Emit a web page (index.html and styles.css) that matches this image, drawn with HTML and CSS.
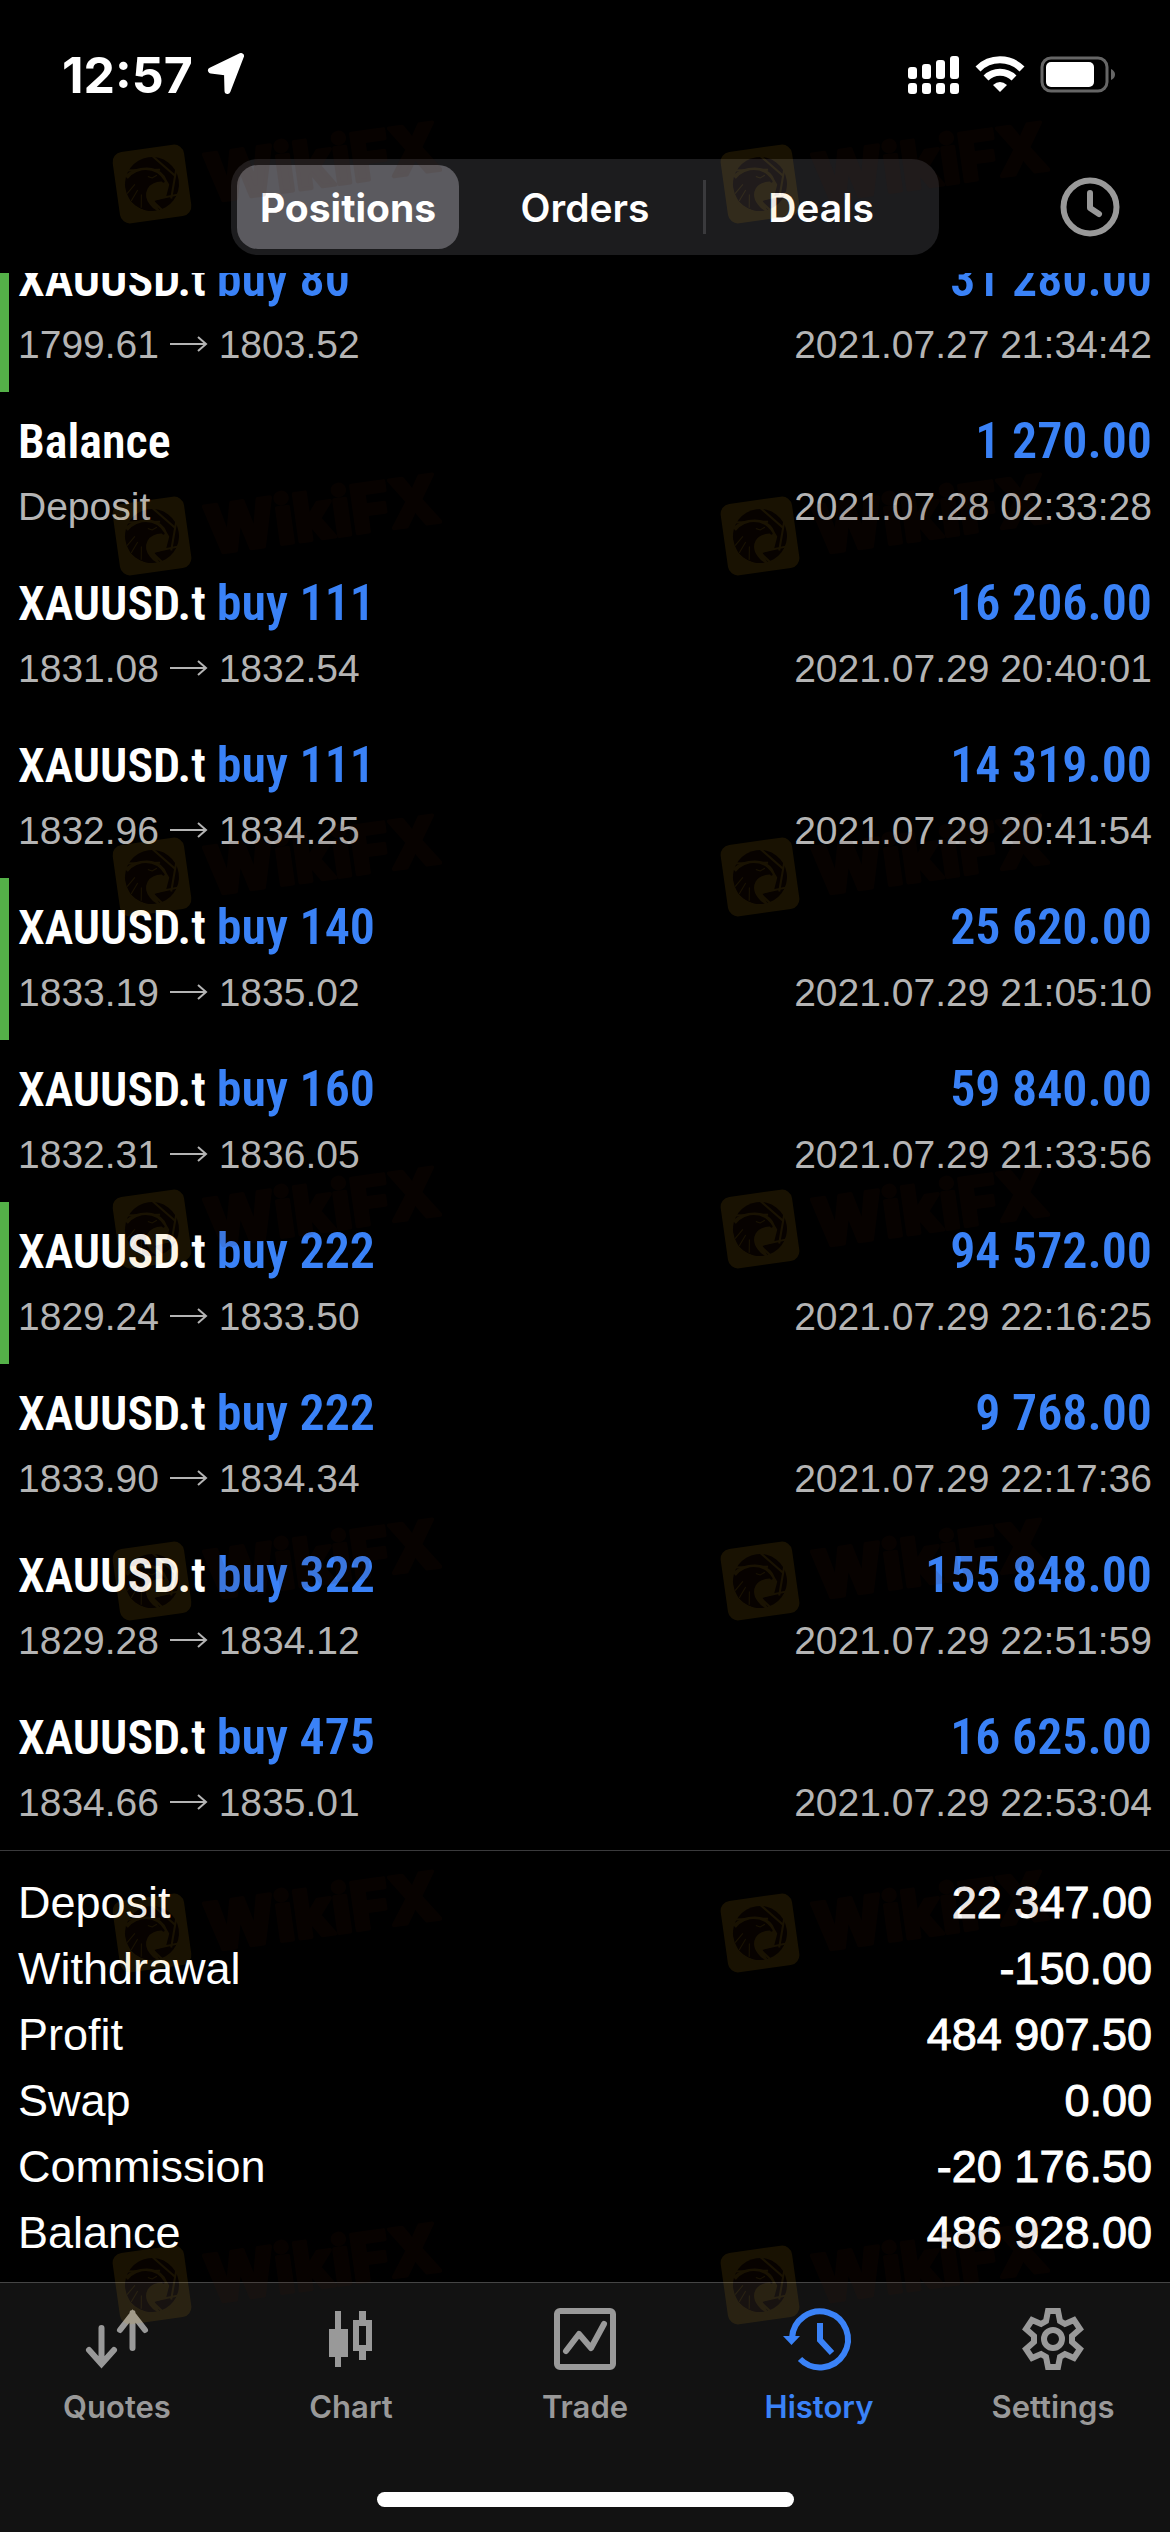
FILE: index.html
```
<!DOCTYPE html>
<html lang="en">
<head>
    <meta charset="UTF-8">
    <meta name="viewport" content="width=device-width, initial-scale=1.0">
    <title>History</title>
    <link rel="stylesheet" href="styles.css">
</head>
<body>

    <div class="status-bar">
        <div class="status-time">
            <span>12:57</span>
            <svg width="38" height="44" viewBox="0 0 38 44"><path d="M34 3 L4 17.500 L20 19.500 L20.500 38 Z" fill="#fff" stroke="#fff" stroke-width="6" stroke-linejoin="round"/></svg>
        </div>
        <div class="status-icons">
            <svg width="52" height="38" viewBox="0 0 52 38" fill="#fff">
                <rect x="0" y="11" width="9" height="12" rx="3"/><rect x="14" y="8" width="9" height="15" rx="3"/>
                <rect x="28" y="4" width="9" height="19" rx="3"/><rect x="42" y="0" width="9" height="23" rx="3"/>
                <rect x="0" y="27" width="9" height="11" rx="3"/><rect x="14" y="27" width="9" height="11" rx="3"/>
                <rect x="28" y="27" width="9" height="11" rx="3"/><rect x="42" y="27" width="9" height="11" rx="3"/>
            </svg>
            <svg width="50" height="38" viewBox="0 0 50 38" fill="none" stroke="#fff" stroke-width="7">
                <path d="M3 13 A31 31 0 0 1 47 13"/>
                <path d="M11 22 A20 20 0 0 1 39 22"/>
                <path d="M18 29 Q25 23 32 29 L25 36 Z" fill="#fff" stroke="none"/>
            </svg>
            <svg width="76" height="38" viewBox="0 0 76 38">
                <rect x="2" y="2" width="65" height="33" rx="9" fill="none" stroke="#666" stroke-width="3"/>
                <rect x="6" y="6" width="48" height="25" rx="5" fill="#fff"/>
                <path d="M71 13 Q75 15 75 18.500 Q75 22 71 24 Z" fill="#666"/>
            </svg>
        </div>
    </div>

    <div class="nav-bar">
        <div class="segmented">
            <button class="segment active">Positions</button>
            <button class="segment">Orders</button>
            <button class="segment">Deals</button>
        </div>
        <button class="clock-btn" aria-label="Period">
            <svg width="60" height="60" viewBox="0 0 60 60" fill="none" stroke="#999" stroke-width="6">
                <circle cx="30" cy="30" r="26.500"/>
                <path d="M30 16 V31 L39 37" stroke-linecap="round" stroke-linejoin="round"/>
            </svg>
        </button>
    </div>

    <div class="list" id="list"></div>

    <div class="summary">
        <div class="summary-row"><span>Deposit</span><b>22 347.00</b></div>
        <div class="summary-row"><span>Withdrawal</span><b>-150.00</b></div>
        <div class="summary-row"><span>Profit</span><b>484 907.50</b></div>
        <div class="summary-row"><span>Swap</span><b>0.00</b></div>
        <div class="summary-row"><span>Commission</span><b>-20 176.50</b></div>
        <div class="summary-row"><span>Balance</span><b>486 928.00</b></div>
    </div>

    <div class="tab-bar">
        <div class="tabs">
            <a href="#" class="tab">
                <svg width="66" height="66" viewBox="0 0 66 66" fill="none" stroke="currentColor" stroke-width="6" stroke-linecap="round">
                    <path d="M17.500 23 V58 M5 45 L17.500 59 L30 45 M48.500 43 V8 M36 25 L48.500 9 L61 25"/>
                </svg>
                <span>Quotes</span>
            </a>
            <a href="#" class="tab">
                <svg width="66" height="66" viewBox="0 0 66 66" fill="currentColor">
                    <path d="M17 6 H23 V24 H30 V52 H23 V62 H17 V52 H11 V24 H17 Z"/>
                    <path fill-rule="evenodd" d="M41 6 H48 V15 H54 V46 H48 V55 H41 V46 H35 V15 H41 Z M41 21 V40 H48 V21 Z"/>
                </svg>
                <span>Chart</span>
            </a>
            <a href="#" class="tab">
                <svg width="66" height="66" viewBox="0 0 66 66" fill="none" stroke="currentColor" stroke-width="6">
                    <rect x="5" y="6" width="56" height="56" rx="3"/>
                    <path d="M14 46 L27 29 L39 43 L52 19" stroke-linecap="round" stroke-linejoin="round"/>
                </svg>
                <span>Trade</span>
            </a>
            <a href="#" class="tab active">
                <svg width="66" height="66" viewBox="0 0 66 66" fill="none" stroke="currentColor" stroke-width="6">
                    <path d="M6 33 A28 28 0 1 1 14 54"/>
                    <path d="M34 18 V35 L46 48"/>
                    <path d="M-3 31 H14 L5.500 40 Z" fill="currentColor" stroke="none"/>
                </svg>
                <span>History</span>
            </a>
            <a href="#" class="tab">
                <svg width="66" height="66" viewBox="0 0 66 66" fill="none" stroke="currentColor" stroke-width="6">
                    <path d="M28 6 H38 L40 16 L45 19 L54 15 L60 24 L52 31 V37 L60 44 L54 53 L45 49 L40 52 L38 62 H28 L26 52 L21 49 L12 53 L6 44 L14 37 V31 L6 24 L12 15 L21 19 L26 16 Z"/>
                    <circle cx="33" cy="34" r="9"/>
                </svg>
                <span>Settings</span>
            </a>
        </div>
        <div class="home-indicator"></div>
    </div>

    <svg width="0" height="0" class="defs">
        <symbol id="wikifx" viewBox="0 0 340 140">
            <g transform="rotate(-8 50 95)">
                <rect x="14" y="59" width="72" height="72" rx="10" fill="#f5b014"/>
                <circle cx="50" cy="95" r="27" fill="#461808"/>
                <path fill="none" stroke="#f5b014" stroke-width="2" d="M26 78 L60 82 M54 67 L74 90 M76 84 L67 112 M75 109 L47 111 M57 123 L46 109"/>
                <path fill="#f5b014" d="M24 83 Q36 75 52 79 Q63 83 65 93 L67 98 L62 110 L50 112 L54 123 L46 121 Q40 113 41 104 Z"/>
                <path fill="#461808" d="M23 92 Q28 81 42 80 Q57 80 63 94 Q62 97 60 94 Q50 93 45 99 Q40 106 45 115 Q47 119 51 122 Q35 122 26 108 Z"/>
                <path fill="none" stroke="#f5b014" stroke-width="1" d="M24 101 L33 93 M27 109 L35 99 M36 117 L38 104 M47 87 L51 89 L56 87"/>
                <text x="104" y="121" class="mark-text">WikiFX</text>
            </g>
        </symbol>
    </svg>
    <div class="watermarks" id="watermarks"></div>

    <script>
        const deals = [
            { symbol: "XAUUSD.t", side: "buy 80", info: "1799.61 → 1803.52", amount: "31 280.00", time: "2021.07.27 21:34:42", tp: true },
            { symbol: "Balance", side: "", info: "Deposit", amount: "1 270.00", time: "2021.07.28 02:33:28" },
            { symbol: "XAUUSD.t", side: "buy 111", info: "1831.08 → 1832.54", amount: "16 206.00", time: "2021.07.29 20:40:01" },
            { symbol: "XAUUSD.t", side: "buy 111", info: "1832.96 → 1834.25", amount: "14 319.00", time: "2021.07.29 20:41:54" },
            { symbol: "XAUUSD.t", side: "buy 140", info: "1833.19 → 1835.02", amount: "25 620.00", time: "2021.07.29 21:05:10", tp: true },
            { symbol: "XAUUSD.t", side: "buy 160", info: "1832.31 → 1836.05", amount: "59 840.00", time: "2021.07.29 21:33:56" },
            { symbol: "XAUUSD.t", side: "buy 222", info: "1829.24 → 1833.50", amount: "94 572.00", time: "2021.07.29 22:16:25", tp: true },
            { symbol: "XAUUSD.t", side: "buy 222", info: "1833.90 → 1834.34", amount: "9 768.00", time: "2021.07.29 22:17:36" },
            { symbol: "XAUUSD.t", side: "buy 322", info: "1829.28 → 1834.12", amount: "155 848.00", time: "2021.07.29 22:51:59" },
            { symbol: "XAUUSD.t", side: "buy 475", info: "1834.66 → 1835.01", amount: "16 625.00", time: "2021.07.29 22:53:04" }
        ];

        const arrow = `<svg class="arrow" width="38" height="18" viewBox="0 0 38 18" fill="none" stroke="currentColor" stroke-width="2"><path d="M0 9 H36 M28 2 L36 9 L28 16"/></svg>`;

        document.getElementById("list").innerHTML = deals.map(deal => `
            <div class="deal ${deal.tp ? "take-profit" : ""}">
                <div class="deal-line deal-title">
                    <span>${deal.symbol} <span class="side">${deal.side}</span></span>
                    <span class="amount">${deal.amount}</span>
                </div>
                <div class="deal-line deal-info">
                    <span>${deal.info.replace("→", arrow)}</span>
                    <span>${deal.time}</span>
                </div>
            </div>`).join("");

        // two marks per line, seven lines down the screen
        document.getElementById("watermarks").innerHTML =
            `<svg class="mark"><use href="#wikifx"/></svg>`.repeat(14);
    </script>
</body>
</html>
```
FILE: styles.css
```
* {
    box-sizing: border-box;
}

body {
    position: relative;
    display: flex;
    flex-direction: column;
    height: 100vh;
    margin: 0;
    overflow: hidden;
    background: #000;
    color: #fff;
    font-family: "Liberation Sans", Arial, sans-serif;
}

button {
    border: none;
    background: none;
    padding: 0;
    color: inherit;
    font-family: inherit;
    cursor: pointer;
}

.status-bar {
    display: flex;
    justify-content: space-between;
    align-items: center;
    height: 150px;
    padding: 0 54px 0 62px;
}

.status-time {
    display: flex;
    align-items: center;
    gap: 14px;
    font: 700 50px Inter, sans-serif;
}

.status-icons {
    display: flex;
    align-items: center;
    gap: 15px;
}

.nav-bar {
    display: grid;
    grid-template-columns: 1fr minmax(0, 708px) 1fr;
    align-items: center;
    height: 123px;
    padding-bottom: 9px;
}

.segmented {
    grid-column: 2;
    display: grid;
    grid-template-columns: repeat(3, 1fr);
    height: 96px;
    padding: 6px 0;
    border-radius: 27px;
    background: #1c1c1e;
}

.segment {
    position: relative;
    border-radius: 21px;
    font: 600 39px Inter, sans-serif;
}

.segment.active {
    margin: 0 8px 0 6px;
    background: #5b5a5f;
    font-weight: 700;
}

.segment + .segment + .segment::before {
    content: "";
    position: absolute;
    left: 0;
    top: 15px;
    width: 3px;
    height: 54px;
    background: #3a3a3d;
}

.clock-btn {
    justify-self: end;
    margin-right: 50px;
    height: 60px;
}

.list {
    flex: 1;
    display: flex;
    flex-direction: column;
    justify-content: flex-end;
    min-height: 0;
    overflow: hidden;
}

.deal {
    flex-shrink: 0;
    height: 162px;
    padding: 18px;
    white-space: nowrap;
}

.deal.take-profit {
    padding-left: 9px;
    border-left: 9px solid #54b148;
}

.deal-line {
    display: flex;
    justify-content: space-between;
    align-items: baseline;
    line-height: 62px;
}

.deal-title {
    font-family: "Avenir Next Condensed", "Roboto Condensed", "Liberation Sans", sans-serif;
    font-size: 48px;
    font-weight: 600;
}

.side,
.amount {
    color: #3a82f7;
    font-size: 50px;
}

.deal-info {
    color: #b4b4b4;
    font-size: 39px;
    line-height: 68px;
}

.arrow {
    vertical-align: 5px;
}

.summary {
    padding: 19px 18px 16px;
    border-top: 1px solid #3a3a3c;
    font-size: 45px;
    line-height: 66px;
}

.summary-row {
    display: flex;
    justify-content: space-between;
}

.summary-row b {
    font-weight: 400;
    -webkit-text-stroke: 1px #fff;
}

.tab-bar {
    height: 250px;
    padding-top: 22px;
    border-top: 1px solid #454545;
    background: #121212;
}

.tabs {
    display: grid;
    grid-template-columns: repeat(5, 1fr);
}

.tab {
    display: flex;
    flex-direction: column;
    align-items: center;
    gap: 17px;
    color: #999;
    font: 600 31px/38px Inter, sans-serif;
    text-decoration: none;
}

.tab svg {
    overflow: visible;
}

.tab.active {
    color: #3a82f7;
}

.home-indicator {
    width: 417px;
    height: 15px;
    margin: 66px auto 0;
    border-radius: 8px;
    background: #fff;
}

.defs {
    position: absolute;
}

.watermarks {
    position: absolute;
    inset: 89px 0 0 102px;
    display: grid;
    grid-template-columns: repeat(2, 608px);
    grid-template-rows: 352px 341px;
    grid-auto-rows: 352px;
    overflow: hidden;
    opacity: 0.1;
    pointer-events: none;
}

.mark {
    width: 340px;
    height: 140px;
}

.mark-text {
    fill: #461808;
    stroke: #461808;
    stroke-width: 4px;
    stroke-linejoin: round;
    font: 800 66px Inter, sans-serif;
}
```
